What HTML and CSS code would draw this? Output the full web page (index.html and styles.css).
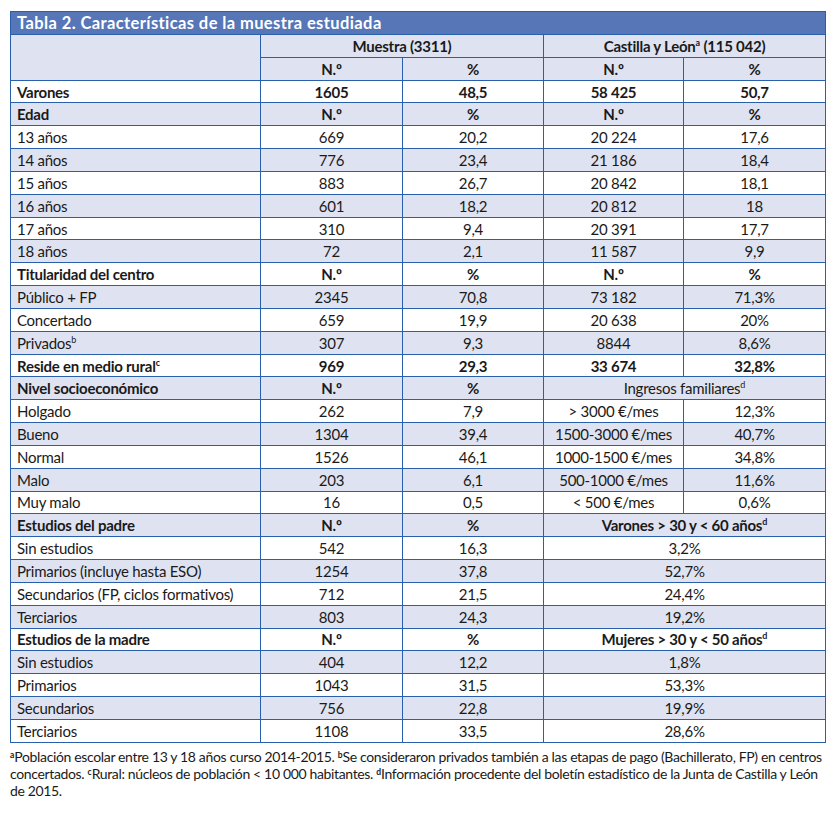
FILE: index.html
```html
<!DOCTYPE html>
<html lang="es">
<head>
<meta charset="utf-8">
<title>Tabla 2</title>
<link rel="stylesheet" href="styles.css">
</head>
<body>
<div class="wrap">
<table class="tbl">
  <colgroup>
    <col class="c1"><col class="c2"><col class="c3"><col class="c4"><col class="c5">
  </colgroup>
  <thead>
    <tr class="title"><th colspan="5">Tabla 2. Características de la muestra estudiada</th></tr>
    <tr class="hd"><th rowspan="2"></th><th colspan="2">Muestra (3311)</th><th colspan="2">Castilla y León<sup>a</sup> (115 042)</th></tr>
    <tr class="hd"><th>N.º</th><th>%</th><th>N.º</th><th>%</th></tr>
  </thead>
  <tbody>
    <tr class="w b"><td>Varones</td><td>1605</td><td>48,5</td><td>58 425</td><td>50,7</td></tr>
    <tr class="l b"><td>Edad</td><td>N.º</td><td>%</td><td>N.º</td><td>%</td></tr>
    <tr class="w"><td>13 años</td><td>669</td><td>20,2</td><td>20 224</td><td>17,6</td></tr>
    <tr class="l"><td>14 años</td><td>776</td><td>23,4</td><td>21 186</td><td>18,4</td></tr>
    <tr class="w"><td>15 años</td><td>883</td><td>26,7</td><td>20 842</td><td>18,1</td></tr>
    <tr class="l"><td>16 años</td><td>601</td><td>18,2</td><td>20 812</td><td>18</td></tr>
    <tr class="w"><td>17 años</td><td>310</td><td>9,4</td><td>20 391</td><td>17,7</td></tr>
    <tr class="l"><td>18 años</td><td>72</td><td>2,1</td><td>11 587</td><td>9,9</td></tr>
    <tr class="w b"><td>Titularidad del centro</td><td>N.º</td><td>%</td><td>N.º</td><td>%</td></tr>
    <tr class="l"><td>Público + FP</td><td>2345</td><td>70,8</td><td>73 182</td><td>71,3%</td></tr>
    <tr class="w"><td>Concertado</td><td>659</td><td>19,9</td><td>20 638</td><td>20%</td></tr>
    <tr class="l"><td>Privados<sup>b</sup></td><td>307</td><td>9,3</td><td>8844</td><td>8,6%</td></tr>
    <tr class="w b"><td>Reside en medio rural<sup>c</sup></td><td>969</td><td>29,3</td><td>33 674</td><td>32,8%</td></tr>
    <tr class="l b"><td>Nivel socioeconómico</td><td>N.º</td><td>%</td><td colspan="2" class="nb">Ingresos familiares<sup>d</sup></td></tr>
    <tr class="w"><td>Holgado</td><td>262</td><td>7,9</td><td>&gt; 3000 €/mes</td><td>12,3%</td></tr>
    <tr class="l"><td>Bueno</td><td>1304</td><td>39,4</td><td>1500-3000 €/mes</td><td>40,7%</td></tr>
    <tr class="w"><td>Normal</td><td>1526</td><td>46,1</td><td>1000-1500 €/mes</td><td>34,8%</td></tr>
    <tr class="l"><td>Malo</td><td>203</td><td>6,1</td><td>500-1000 €/mes</td><td>11,6%</td></tr>
    <tr class="w"><td>Muy malo</td><td>16</td><td>0,5</td><td>&lt; 500 €/mes</td><td>0,6%</td></tr>
    <tr class="l b"><td>Estudios del padre</td><td>N.º</td><td>%</td><td colspan="2">Varones &gt; 30 y &lt; 60 años<sup>d</sup></td></tr>
    <tr class="w"><td>Sin estudios</td><td>542</td><td>16,3</td><td colspan="2">3,2%</td></tr>
    <tr class="l"><td>Primarios (incluye hasta ESO)</td><td>1254</td><td>37,8</td><td colspan="2">52,7%</td></tr>
    <tr class="w"><td>Secundarios (FP, ciclos formativos)</td><td>712</td><td>21,5</td><td colspan="2">24,4%</td></tr>
    <tr class="l"><td>Terciarios</td><td>803</td><td>24,3</td><td colspan="2">19,2%</td></tr>
    <tr class="w b"><td>Estudios de la madre</td><td>N.º</td><td>%</td><td colspan="2">Mujeres &gt; 30 y &lt; 50 años<sup>d</sup></td></tr>
    <tr class="l"><td>Sin estudios</td><td>404</td><td>12,2</td><td colspan="2">1,8%</td></tr>
    <tr class="w"><td>Primarios</td><td>1043</td><td>31,5</td><td colspan="2">53,3%</td></tr>
    <tr class="l"><td>Secundarios</td><td>756</td><td>22,8</td><td colspan="2">19,9%</td></tr>
    <tr class="w"><td>Terciarios</td><td>1108</td><td>33,5</td><td colspan="2">28,6%</td></tr>
  </tbody>
</table>
<p class="notes"><sup>a</sup>Población escolar entre 13 y 18 años curso 2014-2015. <sup>b</sup>Se consideraron privados también a las etapas de pago (Bachillerato, FP) en centros concertados. <sup>c</sup>Rural: núcleos de población &lt; 10 000 habitantes. <sup>d</sup>Información procedente del boletín estadístico de la Junta de Castilla y León de 2015.</p>
</div>
</body>
</html>
```
FILE: styles.css
```css
html, body {
  margin: 0;
  padding: 0;
  background: #ffffff;
}
body {
  font-family: Lato, "Noto Sans", sans-serif;
  font-size: 15px;
  letter-spacing: -0.25px;
  color: #1a1a1a;
}
.wrap {
  padding: 11px 0 0 10px;
  width: 816px;
}
.tbl {
  border-collapse: collapse;
  table-layout: fixed;
  width: 815px;
}
.c1 { width: 250px; }
.c2 { width: 142px; }
.c3 { width: 141px; }
.c4 { width: 140px; }
.c5 { width: 142px; }
.tbl th, .tbl td {
  border: 1px solid #2860ab;
  padding: 0;
  text-align: center;
  white-space: nowrap;
  line-height: 16px;
}
.tbl td:first-child {
  text-align: left;
  padding-left: 6px;
}
.tbl tr {
  height: 22.84px;
}
.tbl tr.title {
  height: 23px;
}
.tbl tr.title th {
  background: #5676b7;
  color: #ffffff;
  font-weight: 700;
  text-align: left;
  padding-left: 6px;
  font-size: 16.5px;
  letter-spacing: 0.4px;
}
.tbl tr.hd th {
  background: #dfe3f1;
  font-weight: 700;
}
.tbl tr.l td { background: #dfe3f1; }
.tbl tr.w td { background: #ffffff; }
.tbl tr.b td { font-weight: 700; }
.tbl tr.b td.nb { font-weight: 400; }
sup {
  font-size: 9px;
  line-height: 0;
  vertical-align: 6px;
  letter-spacing: 0;
}
.notes {
  margin: 5px 0 0 0;
  line-height: 17px;
  font-size: 14px;
  letter-spacing: -0.35px;
  width: 816px;
}
.notes sup {
  font-weight: 700;
  font-size: 8.5px;
  vertical-align: 4px;
}
```
